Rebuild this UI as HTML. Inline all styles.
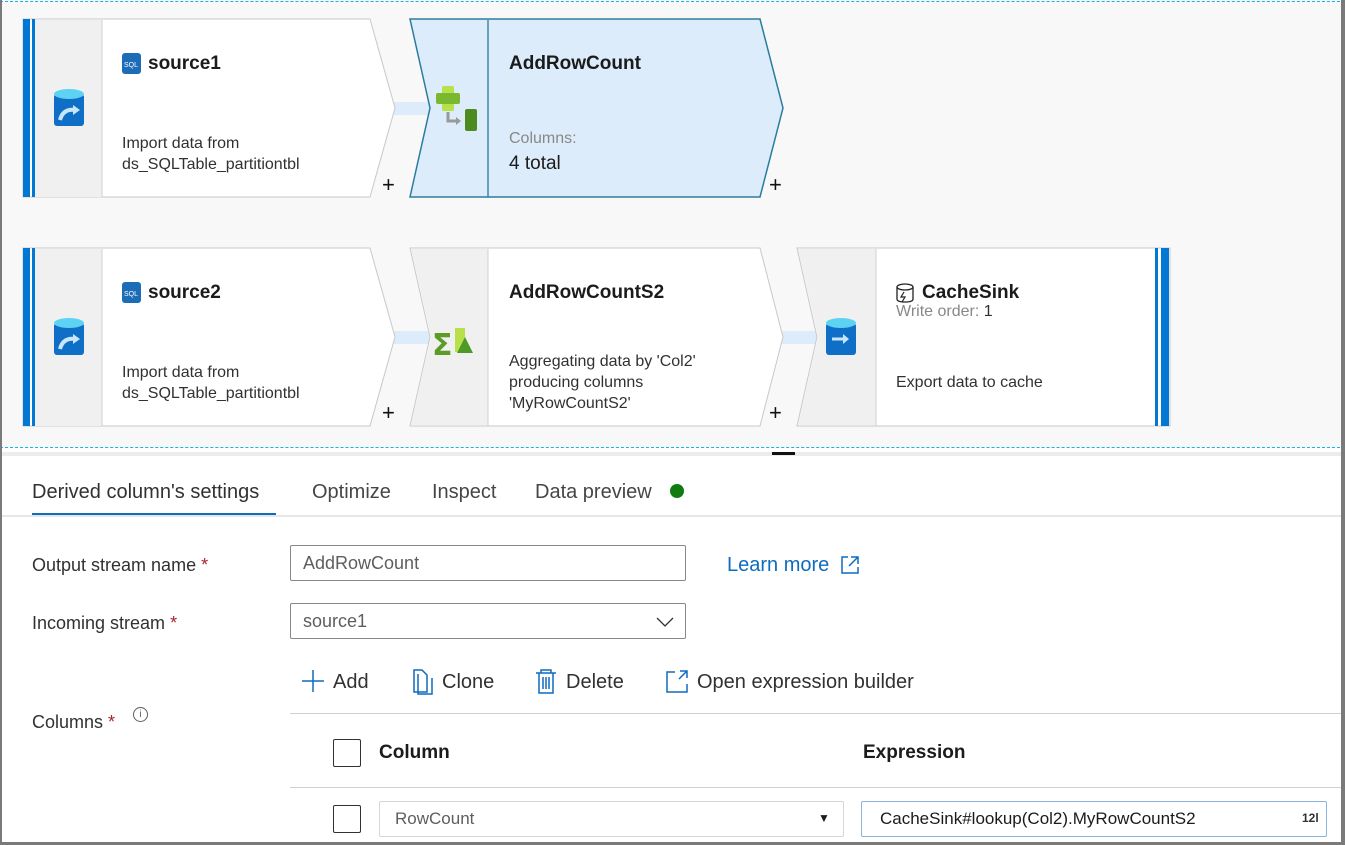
<!DOCTYPE html>
<html><head><meta charset="utf-8"><style>
*{margin:0;padding:0;box-sizing:border-box}
body{width:1345px;height:845px;overflow:hidden;background:#fff;font-family:"Segoe UI","Liberation Sans",sans-serif;color:#1b1b1b;position:relative}
.abs{position:absolute;white-space:nowrap}
.m{margin-top:3px}
.canvas{position:absolute;left:0;top:0;width:1345px;height:448px;background:#f8f8f8}
.t{font-size:19px;font-weight:bold;margin-top:3px}
.d{font-size:16px;color:#323130;line-height:21px;margin-top:2px}
.lbl{font-size:18px;color:#323130;margin-top:3px}
.req{color:#a4262c}
.inp{position:absolute;border:1px solid #8a8886;border-radius:2px;background:#fff;font-size:18px;color:#605e5c;padding-left:12px;display:flex;align-items:center}
.tb{font-size:20px;color:#323130;margin-top:3px}
.dash{position:absolute;left:0;width:1345px;height:0;border-top:1px dashed #1ab3e6}
</style></head><body>
<div class="canvas"></div>
<div class="dash" style="top:1px"></div>
<div class="dash" style="top:447px"></div>
<svg class="abs" style="left:0;top:0" width="1345" height="460">
<rect x="392" y="102" width="40" height="13" fill="#dcecfb"/>
<rect x="392" y="331" width="40" height="13" fill="#dcecfb"/>
<rect x="780" y="331" width="40" height="13" fill="#dcecfb"/>
<g>
<path d="M23 19H370L395 108L370 197H23Z" fill="#fff" stroke="#c8c8c8"/>
<rect x="35" y="20" width="67" height="177" fill="#f0f0f0"/>
<line x1="102" y1="20" x2="102" y2="197" stroke="#d0d0d0"/>
<rect x="23" y="19" width="7" height="178" fill="#0078d4"/>
<rect x="32" y="19" width="3" height="178" fill="#0078d4"/>
</g>
<path d="M410 19H760L783 108L760 197H410L430 108Z" fill="#dcecfb" stroke="#2b7c9e" stroke-width="1.5"/>
<line x1="488" y1="20" x2="488" y2="197" stroke="#2b7c9e" stroke-width="1.3"/>
<g>
<path d="M23 248H370L395 337L370 426H23Z" fill="#fff" stroke="#c8c8c8"/>
<rect x="35" y="249" width="67" height="177" fill="#f0f0f0"/>
<line x1="102" y1="249" x2="102" y2="426" stroke="#d0d0d0"/>
<rect x="23" y="248" width="7" height="178" fill="#0078d4"/>
<rect x="32" y="248" width="3" height="178" fill="#0078d4"/>
</g>
<path d="M410 248H760L783 337L760 426H410L430 337Z" fill="#fff" stroke="#c8c8c8"/>
<path d="M411 249H488V425H411L431 337Z" fill="#f0f0f0"/>
<line x1="488" y1="249" x2="488" y2="426" stroke="#d0d0d0"/>
<path d="M797 248H1170V426H797L817 337Z" fill="#fff" stroke="#c8c8c8"/>
<path d="M798 249H876V425H798L818 337Z" fill="#f0f0f0"/>
<line x1="876" y1="249" x2="876" y2="426" stroke="#d0d0d0"/>
<rect x="1155" y="248" width="3" height="178" fill="#0078d4"/>
<rect x="1161" y="248" width="8" height="178" fill="#0078d4"/>
<g><rect x="54" y="94" width="30" height="32" rx="3" fill="#0f6fc6"/><ellipse cx="69" cy="94" rx="15" ry="5" fill="#5ed2f2"/><path d="M60 120q3-12 16-10" stroke="#c8e6fa" stroke-width="4" fill="none"/><path d="M73 105l7 5-7 5z" fill="#c8e6fa"/></g>
<g transform="translate(0,229)"><rect x="54" y="94" width="30" height="32" rx="3" fill="#0f6fc6"/><ellipse cx="69" cy="94" rx="15" ry="5" fill="#5ed2f2"/><path d="M60 120q3-12 16-10" stroke="#c8e6fa" stroke-width="4" fill="none"/><path d="M73 105l7 5-7 5z" fill="#c8e6fa"/></g>
<rect x="826" y="323" width="30" height="32" rx="3" fill="#0f6fc6"/><ellipse cx="841" cy="323" rx="15" ry="5" fill="#5ed2f2"/><path d="M832 339h12" stroke="#c8e6fa" stroke-width="3"/><path d="M843 334l6 5-6 5z" fill="#c8e6fa"/>
<rect x="122" y="53" width="19" height="21" rx="3" fill="#1d6cb8"/><text x="124" y="67" font-size="7" fill="#fff" font-family="Liberation Sans">SQL</text>
<rect x="122" y="282" width="19" height="21" rx="3" fill="#1d6cb8"/><text x="124" y="296" font-size="7" fill="#fff" font-family="Liberation Sans">SQL</text>
<rect x="442" y="86" width="12" height="25" rx="2" fill="#b7e04b"/><rect x="436" y="93" width="24" height="11" rx="2" fill="#7ab92f"/>
<path d="M448 112v9h9" stroke="#999" stroke-width="3" fill="none"/><path d="M456 117l5 4-5 4z" fill="#999"/>
<rect x="465" y="109" width="12" height="22" rx="2" fill="#4d8b1f"/>
<text x="432" y="355" font-size="30" font-weight="bold" fill="#5a9c26" font-family="DejaVu Sans">Σ</text>
<rect x="455" y="328" width="10" height="24" fill="#b7e04b"/><path d="M457 353l8-16 8 16z" fill="#4d9a27"/>
<text x="382" y="192" font-size="22" fill="#111" font-family="Liberation Sans">+</text>
<text x="769" y="192" font-size="22" fill="#111" font-family="Liberation Sans">+</text>
<text x="382" y="420" font-size="22" fill="#111" font-family="Liberation Sans">+</text>
<text x="769" y="420" font-size="22" fill="#111" font-family="Liberation Sans">+</text>
<ellipse cx="905" cy="287" rx="8" ry="3" fill="none" stroke="#222" stroke-width="1.3"/><path d="M897 287v12q0 3 8 3q8 0 8-3v-12" fill="none" stroke="#222" stroke-width="1.3"/><path d="M904 292l-3 5h4l-3 5" stroke="#222" fill="none" stroke-width="1.2"/>
<rect x="0" y="452" width="1345" height="4" fill="#ececec"/>
<rect x="772" y="452" width="23" height="3" fill="#111"/>
</svg>
<div class="abs t" style="left:148px;top:50px">source1</div>
<div class="abs d" style="left:122px;top:131px">Import data from<br>ds_SQLTable_partitiontbl</div>
<div class="abs t" style="left:509px;top:50px">AddRowCount</div>
<div class="abs m" style="left:509px;top:127px;font-size:16px;color:#8a8886">Columns:</div>
<div class="abs m" style="left:509px;top:150px;font-size:19px">4 total</div>
<div class="abs t" style="left:148px;top:279px">source2</div>
<div class="abs d" style="left:122px;top:360px">Import data from<br>ds_SQLTable_partitiontbl</div>
<div class="abs t" style="left:509px;top:279px">AddRowCountS2</div>
<div class="abs d" style="left:509px;top:349px">Aggregating data by 'Col2'<br>producing columns<br>'MyRowCountS2'</div>
<div class="abs t" style="left:922px;top:279px">CacheSink</div>
<div class="abs m" style="left:896px;top:300px;font-size:16px;color:#8a8886">Write order: <span style="color:#323130">1</span></div>
<div class="abs d" style="left:896px;top:370px">Export data to cache</div>

<div class="abs m" style="left:32px;top:478px;font-size:20px;color:#323130">Derived column's settings</div>
<div class="abs" style="left:32px;top:513px;width:244px;height:3px;background:#0f6cbd"></div>
<div class="abs m" style="left:312px;top:478px;font-size:20px;color:#484644">Optimize</div>
<div class="abs m" style="left:432px;top:478px;font-size:20px;color:#484644">Inspect</div>
<div class="abs m" style="left:535px;top:478px;font-size:20px;color:#484644">Data preview</div>
<div class="abs" style="left:670px;top:484px;width:14px;height:14px;border-radius:50%;background:#107c10"></div>
<div class="abs" style="left:0;top:515px;width:1345px;height:2px;background:#e6e6e6"></div>

<div class="abs lbl" style="left:32px;top:552px">Output stream name <span class="req">*</span></div>
<div class="inp" style="left:290px;top:545px;width:396px;height:36px">AddRowCount</div>
<div class="abs m" style="left:727px;top:551px;font-size:20px;color:#0f6cbd">Learn more</div>
<svg class="abs" style="left:840px;top:555px" width="20" height="20"><path d="M8 2H2v16h16v-6M11 2h7v7M18 2L9 11" stroke="#0f6cbd" stroke-width="1.5" fill="none"/></svg>
<div class="abs lbl" style="left:32px;top:610px">Incoming stream <span class="req">*</span></div>
<div class="inp" style="left:290px;top:603px;width:396px;height:36px">source1</div>
<svg class="abs" style="left:655px;top:614px" width="20" height="14"><path d="M2 4l8 8 8-8" stroke="#323130" stroke-width="1.3" fill="none"/></svg>

<svg class="abs" style="left:300px;top:668px" width="640" height="30">
<path d="M13 2v22M2 13h22" stroke="#0f6cbd" stroke-width="1.5"/>
<path d="M114 2h8l5 5v17h-13zM118 6v20h14V10" stroke="#0f6cbd" stroke-width="1.5" fill="none"/>
<path d="M236 5h20M241 5V2h10v3M239 5v20h14V5M243 9v12M246 9v12M249 9v12" stroke="#0f6cbd" stroke-width="1.5" fill="none"/>
<path d="M375 4h-8v20h20v-8M380 3h7v7M387 3l-8 8" stroke="#0f6cbd" stroke-width="1.5" fill="none"/>
</svg>
<div class="abs tb" style="left:333px;top:668px">Add</div>
<div class="abs tb" style="left:442px;top:668px">Clone</div>
<div class="abs tb" style="left:566px;top:668px">Delete</div>
<div class="abs tb" style="left:697px;top:668px">Open expression builder</div>

<div class="abs lbl" style="left:32px;top:709px">Columns <span class="req">*</span></div>
<div class="abs" style="left:133px;top:707px;width:15px;height:15px;border:1px solid #605e5c;border-radius:50%;font-size:10px;text-align:center;line-height:13px;color:#605e5c">i</div>
<div class="abs" style="left:290px;top:713px;width:1055px;height:1px;background:#d0d0d0"></div>
<div class="abs" style="left:333px;top:739px;width:28px;height:28px;border:1px solid #323130;border-radius:2px"></div>
<div class="abs m" style="left:379px;top:739px;font-size:19px;font-weight:bold">Column</div>
<div class="abs m" style="left:863px;top:739px;font-size:19px;font-weight:bold">Expression</div>
<div class="abs" style="left:290px;top:787px;width:1055px;height:1px;background:#d0d0d0"></div>
<div class="abs" style="left:333px;top:805px;width:28px;height:28px;border:1px solid #323130;border-radius:2px"></div>
<div class="inp" style="left:379px;top:801px;width:465px;height:36px;border-color:#d6d6d6;font-size:17px;color:#605e5c;padding-left:15px">RowCount</div>
<div class="abs" style="left:818px;top:811px;font-size:12px">▼</div>
<div class="inp" style="left:861px;top:801px;width:466px;height:36px;border-color:#8ab4e0;font-size:17px;color:#1b1b1b;padding-left:18px">CacheSink#lookup(Col2).MyRowCountS2</div>
<div class="abs" style="left:1302px;top:811px;font-size:12px;font-weight:bold;color:#333">12l</div>

<div class="abs" style="left:0;top:0;width:2px;height:845px;background:#7a7a7a"></div>
<div class="abs" style="left:1341px;top:0;width:4px;height:845px;background:#7a7a7a"></div>
<div class="abs" style="left:0;top:842px;width:1345px;height:3px;background:#7a7a7a"></div>
</body></html>
